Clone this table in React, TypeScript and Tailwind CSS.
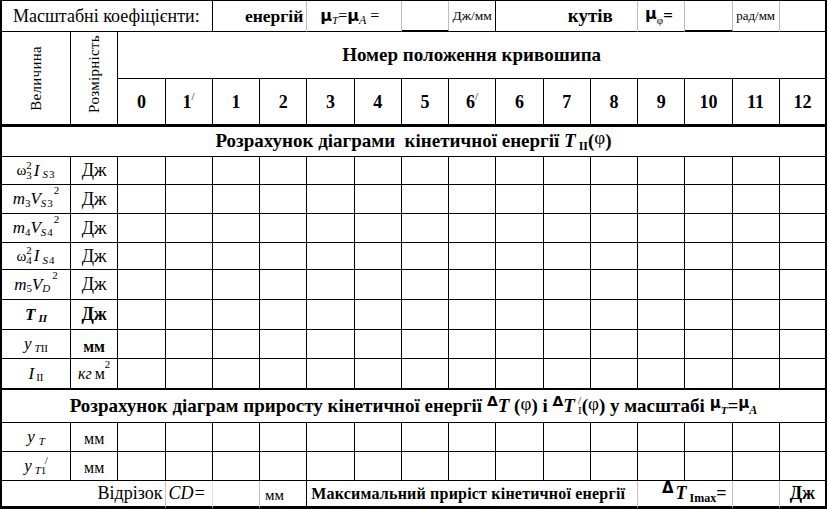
import React from "react";

type P = { children?: React.ReactNode; className?: string };

const Sub = ({ children, className = "" }: P) => (
  <span className={`relative top-[4px] text-[11px] ${className}`}>{children}</span>
);
const Sup = ({ children, className = "" }: P) => (
  <span className={`relative -top-[8px] text-[11px] ${className}`}>{children}</span>
);
const SS = ({ sup, sub, className = "" }: { sup: React.ReactNode; sub: React.ReactNode; className?: string }) => (
  <span className={`inline-flex flex-col leading-[0.9] text-[11px] align-[-6px] ${className}`}>
    <span>{sup}</span>
    <span>{sub}</span>
  </span>
);

const cells = Array.from({ length: 15 }, (_, i) => i);
const numbers: React.ReactNode[] = [
  "0",
  <>1<Sup className="font-normal text-[10px] -top-[7px]">/</Sup></>,
  "1", "2", "3", "4", "5",
  <>6<Sup className="font-normal text-[10px] -top-[7px]">/</Sup></>,
  "6", "7", "8", "9", "10", "11", "12",
];

function DataRow({ label, unit, thick = false }: { label: React.ReactNode; unit: React.ReactNode; thick?: boolean }) {
  const b = thick ? "border-b-2" : "border-b";
  return (
    <>
      <div className={`${b} border-r border-black flex items-center justify-center whitespace-nowrap text-[17px]`}>{label}</div>
      <div className={`${b} border-r border-black flex items-center justify-center whitespace-nowrap text-[18px]`}>{unit}</div>
      {cells.map((i) => (
        <div key={i} className={`${b} ${i === 14 ? "border-r-2" : "border-r"} border-black`} />
      ))}
    </>
  );
}

export default function App() {
  return (
    <div className="w-[827px] h-[509px] bg-white text-black font-['Liberation_Serif','DejaVu_Serif',serif] overflow-hidden">
      <div className="w-[827px] grid grid-cols-[69px_repeat(16,minmax(0,1fr))] grid-rows-[31px_47px_48px_30px_28px_29px_29px_27px_30px_30px_29px_31px_33px_29px_29px_28px] border-l-2 border-t border-black">
        {/* Top row: scale coefficients */}
        <div className="col-span-4 flex items-center pl-[11px] text-[18px] whitespace-nowrap border-r border-b border-black">
          Масштабні коефіцієнти:
        </div>
        <div className="col-span-2 flex items-center justify-end pr-[3px] text-[17.5px] font-bold border-b border-b-black border-r border-r-[#bdbdbd]">
          енергій
        </div>
        <div className="col-span-2 flex items-center pl-[13px] text-[16px] whitespace-nowrap border-b border-b-black border-r border-r-[#bdbdbd]">
          <b className="font-['DejaVu_Sans',sans-serif] text-[16px]">μ</b>
          <Sub className="italic text-[10px]">T</Sub>=<b className="font-['DejaVu_Sans',sans-serif] text-[16px]">μ</b>
          <Sub className="italic text-[12px]">A</Sub>&nbsp;=
        </div>
        <div className="border-b-2 border-b-black border-r border-r-[#bdbdbd]" />
        <div className="flex items-center justify-center text-[13.5px] whitespace-nowrap border-b border-r border-black">
          Дж/мм
        </div>
        <div className="border-b border-black" />
        <div className="col-span-2 flex items-center justify-center font-bold text-[19px] border-b border-b-black border-r border-r-[#bdbdbd]">
          кутів
        </div>
        <div className="flex items-center pl-[7px] font-bold text-[17px] whitespace-nowrap border-b border-b-black border-r border-r-[#bdbdbd]">
          <span className="font-['DejaVu_Sans',sans-serif] text-[16px] relative -top-[2px]">μ</span>
          <Sub className="font-normal text-[11px] top-[2px]">φ</Sub>=
        </div>
        <div className="border-b-2 border-b-black border-r border-r-[#bdbdbd]" />
        <div className="flex items-center justify-center text-[13px] whitespace-nowrap border-b border-b-black border-r border-r-[#bdbdbd]">
          рад/мм
        </div>
        <div className="border-b border-r-2 border-black" />

        {/* Header */}
        <div className="row-span-2 flex items-center justify-center border-r border-b-[3px] border-black">
          <span className="[writing-mode:vertical-rl] rotate-180 text-[15px] tracking-[0.3px]">Величина</span>
        </div>
        <div className="row-span-2 flex items-center justify-center border-r border-b-[3px] border-black">
          <span className="[writing-mode:vertical-rl] rotate-180 text-[15px] tracking-[0.3px] -translate-y-[4px]">Розмірність</span>
        </div>
        <div className="col-span-15 flex items-center justify-center font-bold text-[19px] border-r-2 border-b border-black">
          Номер положення кривошипа
        </div>
        {numbers.map((n, i) => (
          <div
            key={i}
            className={`flex items-center justify-center pt-[2px] font-bold text-[18px] border-b-[3px] ${i === 14 ? "border-r-2" : "border-r"} border-black`}
          >
            <span>{n}</span>
          </div>
        ))}

        {/* Section 1 */}
        <div className="col-span-full flex items-center justify-center font-bold text-[19px] whitespace-pre border-r-2 border-b border-black">
          Розрахунок діаграми  кінетичної енергії <i>T</i>
          <Sub className="text-[12px] top-[3px]"> II</Sub>(<span className="relative -top-[3px] font-normal">φ</span>)
        </div>

        <DataRow
          label={
            <>
              <span className="text-[15px]">ω</span>
              <SS sup="2" sub="3" />
              <i className="ml-[2px]">I</i>
              <Sub className="ml-[3px] tracking-[1px]">
                <i>S</i>3
              </Sub>
            </>
          }
          unit="Дж"
        />
        <DataRow
          label={
            <>
              <i>m</i>
              <Sub className="top-[3px]">3</Sub>
              <i>V</i>
              <Sub className="top-[3px] tracking-[1px]">
                <i>S</i>3
              </Sub>
              <Sup className="-top-[9px]">2</Sup>
            </>
          }
          unit="Дж"
        />
        <DataRow
          label={
            <>
              <i>m</i>
              <Sub className="top-[3px]">4</Sub>
              <i>V</i>
              <Sub className="top-[3px] tracking-[1px]">
                <i>S</i>4
              </Sub>
              <Sup className="-top-[9px]">2</Sup>
            </>
          }
          unit="Дж"
        />
        <DataRow
          label={
            <>
              <span className="text-[15px]">ω</span>
              <SS sup="2" sub="4" />
              <i className="ml-[2px]">I</i>
              <Sub className="ml-[3px] tracking-[1px]">
                <i>S</i>4
              </Sub>
            </>
          }
          unit="Дж"
        />
        <DataRow
          label={
            <>
              <i>m</i>
              <Sub className="top-[2px]">5</Sub>
              <i>V</i>
              <Sub className="top-[3px]">
                <i>D</i>
              </Sub>
              <Sup className="-top-[9px] ml-[2px]">2</Sup>
            </>
          }
          unit="Дж"
        />
        <DataRow
          label={
            <>
              <b>
                <i>T</i>
              </b>
              <Sub className="font-bold italic top-[3px] ml-[3px]">II</Sub>
            </>
          }
          unit={<b>Дж</b>}
        />
        <DataRow
          label={
            <>
              <i>y</i>
              <Sub className="ml-[3px]">
                <i>T</i>II
              </Sub>
            </>
          }
          unit={<b className="text-[16px] relative top-[3px]">мм</b>}
        />
        <DataRow
          thick
          label={
            <>
              <i>I</i>
              <Sub className="ml-[2px]">II</Sub>
            </>
          }
          unit={
            <>
              <i className="text-[16px]">кг</i>
              <span className="text-[16px] ml-[3px]">м</span>
              <Sup className="-top-[9px]">2</Sup>
            </>
          }
        />

        {/* Section 2 */}
        <div className="col-span-full flex items-center justify-center font-bold text-[19px] whitespace-pre border-r-2 border-b border-black">
          Розрахунок діаграм приросту кінетичної енергії{" "}
          <span className="font-['DejaVu_Sans',sans-serif] text-[14px] relative -top-[5px]">Δ</span>
          <i>T</i> (<span className="relative -top-[2px] font-normal">φ</span>) і{" "}
          <span className="font-['DejaVu_Sans',sans-serif] text-[14px] relative -top-[5px]">Δ</span>
          <i>T</i>
          <SS sup="/" sub="I" className="ml-[3px] font-normal align-[-4px]" />(
          <span className="relative -top-[2px] font-normal">φ</span>) у масштабі{" "}
          <span className="font-['DejaVu_Sans',sans-serif] text-[15px] relative -top-[3px]">μ</span>
          <Sub className="italic text-[11px] top-[3px]">T</Sub>=
          <span className="font-['DejaVu_Sans',sans-serif] text-[15px] relative -top-[3px]">μ</span>
          <Sub className="italic text-[12px] top-[3px]">A</Sub>
        </div>

        <DataRow
          label={
            <>
              <i>y</i>
              <Sub className="ml-[4px]">
                <i>T</i>
              </Sub>
            </>
          }
          unit={<span className="text-[16px] relative top-[2px]">мм</span>}
        />
        <DataRow
          label={
            <>
              <i>y</i>
              <SS
                sup={<span className="ml-[13px]">/</span>}
                sub={
                  <span className="ml-[3px]">
                    <i>T</i>1
                  </span>
                }
                className="align-[-5px]"
              />
            </>
          }
          unit={<span className="text-[16px] relative top-[2px]">мм</span>}
        />

        {/* Last row */}
        <div className="col-span-3 flex items-center justify-end pr-[2px] text-[18px] border-b-[3px] border-b-black border-r border-r-[#c4c4c4]">
          Відрізок
        </div>
        <div className="flex items-center pl-[3px] italic text-[18px] border-b-[3px] border-b-black border-r border-r-[#e2e2e2]">
          CD=
        </div>
        <div className="border-b-[3px] border-b-black border-r border-r-[#c4c4c4]" />
        <div className="flex items-center pl-[5px] pt-[3px] text-[15px] border-b-[3px] border-r border-black">мм</div>
        <div className="col-span-7 flex items-center pl-[4px] font-bold text-[16px] tracking-[0.2px] whitespace-nowrap border-b-[3px] border-b-black border-r border-r-[#c4c4c4]">
          Максимальний приріст кінетичної енергії
        </div>
        <div className="col-span-2 flex items-center justify-end pr-[5px] font-bold text-[18px] whitespace-nowrap border-b-[3px] border-b-black border-r border-r-[#c4c4c4]">
          <span className="font-['DejaVu_Sans',sans-serif] text-[15px] relative -top-[5px] mr-[2px]">Δ</span>
          <i>T</i>
          <Sub className="text-[12px] top-[4px] ml-[3px]">Imax</Sub>=
        </div>
        <div className="border-b-[3px] border-b-black border-r border-r-[#c4c4c4]" />
        <div className="flex items-center justify-center font-bold text-[18px] border-b-[3px] border-r-2 border-black">Дж</div>
      </div>
    </div>
  );
}
